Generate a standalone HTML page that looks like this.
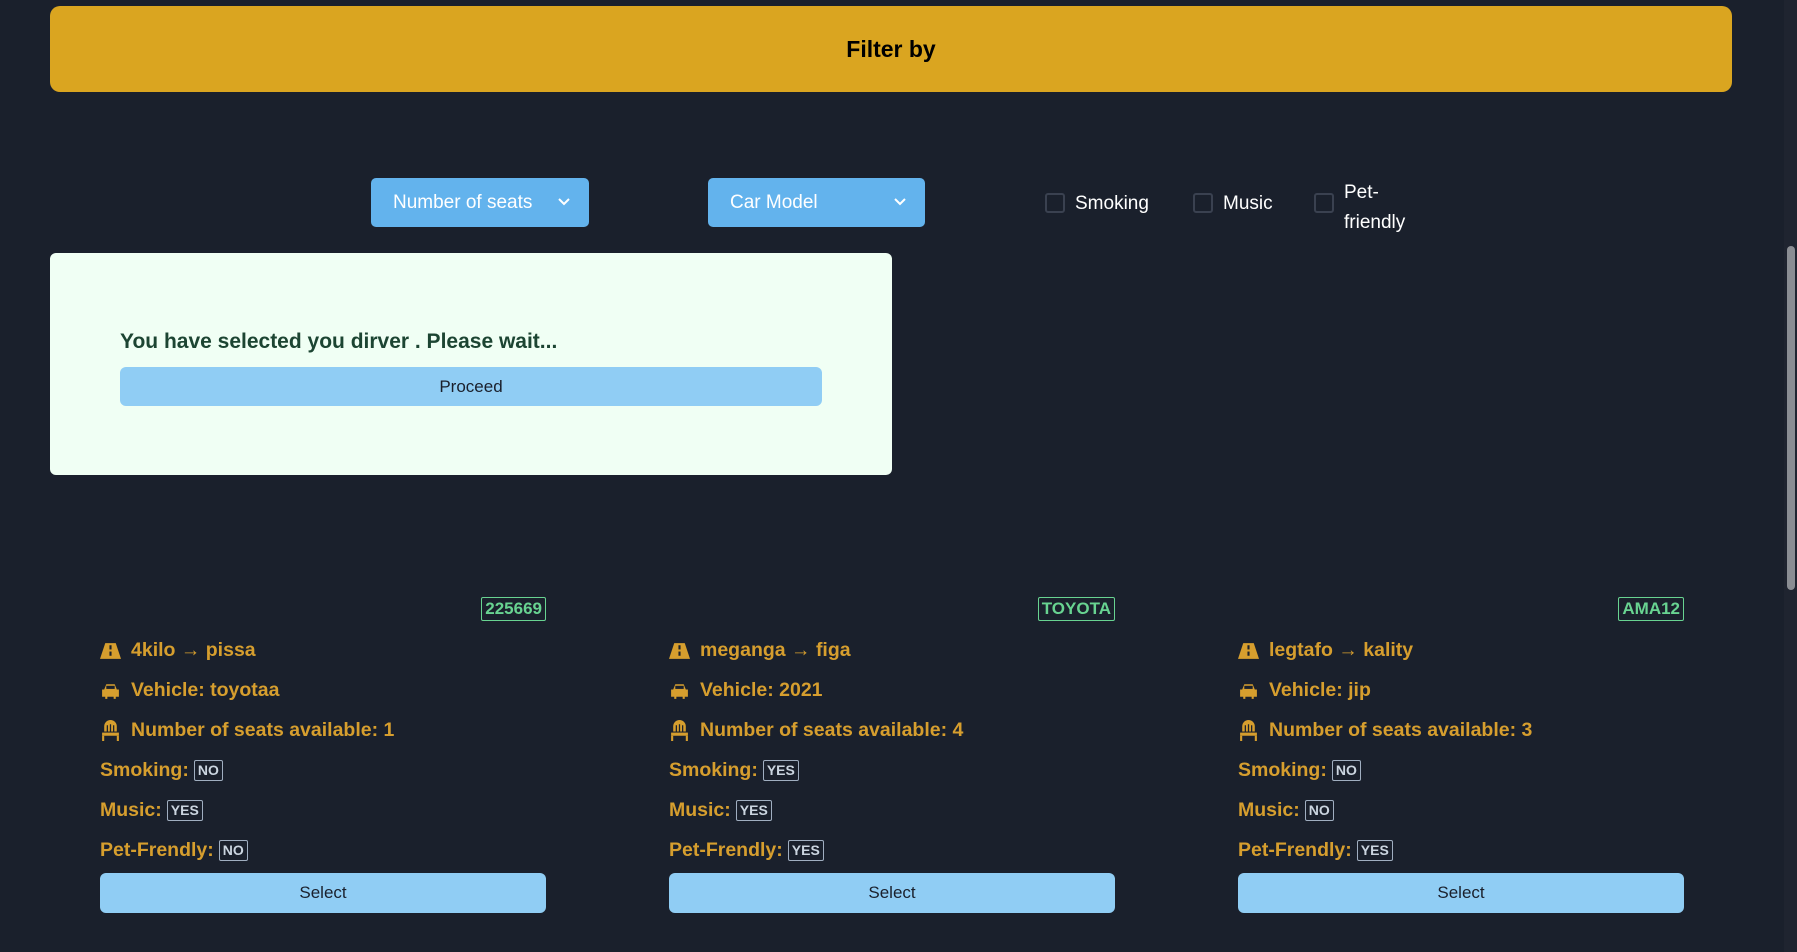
<!DOCTYPE html>
<html><head><meta charset="utf-8"><style>
*{box-sizing:border-box;margin:0;padding:0}
html,body{width:1797px;height:952px;overflow:hidden;background:#1a202c;font-family:"Liberation Sans",sans-serif;position:relative}
.a{position:absolute}
.bar{left:50px;top:6px;width:1682px;height:86px;background:#daa520;border-radius:10px;display:flex;align-items:center;justify-content:center;font-weight:bold;font-size:23px;color:#000}
.sb{left:1784px;top:0;width:13px;height:952px;background:#1f2430}
.thumb{left:1787px;top:246px;width:8px;height:344px;background:#8a8d93;border-radius:4px}
.dd{top:178px;height:49px;background:#63b3ed;border-radius:5px;color:#fff;font-size:19px;display:flex;align-items:center;padding-left:22px}
.dd svg{position:absolute;right:18px;top:19px}
.cb{width:20px;height:20px;border:2px solid #3a4150;border-radius:3px;top:193px}
.lbl{color:#fff;font-size:19px}
.card{left:50px;top:253px;width:842px;height:222px;background:#f0fff4;border-radius:6px}
.h{left:120px;top:330px;font-size:21px;font-weight:bold;color:#1c4532}
.btn{background:#90cdf4;border-radius:6px;color:#1a202c;font-size:17px;display:flex;align-items:center;justify-content:center}
.col{top:590px;width:446px;height:330px}
.badge{position:absolute;right:0;top:7px;border:1.5px solid #68d391;color:#68d391;font-weight:bold;font-size:17px;padding:1px 3px;border-radius:2px;line-height:20px}
.ln{position:absolute;left:0;color:#d69e2e;font-weight:bold;font-size:19.5px;display:flex;align-items:center;height:24px}
.ln svg{margin-right:10px}
.yn{border:1.5px solid #a0aec0;color:#cbd5e0;font-size:14px;font-weight:bold;padding:1px 3px;margin-left:5px;border-radius:2px;line-height:17px}
.sel{position:absolute;left:0;top:283px;width:446px;height:40px}
</style></head><body>
<div class="a sb"></div><div class="a thumb"></div>
<div class="a bar">Filter by</div>
<div class="a dd" style="left:371px;width:218px">Number of seats<svg width="14" height="10" viewBox="0 0 14 10"><path d="M2 2l5 5 5-5" stroke="#fff" stroke-width="2" fill="none"/></svg></div>
<div class="a dd" style="left:708px;width:217px">Car Model<svg width="14" height="10" viewBox="0 0 14 10"><path d="M2 2l5 5 5-5" stroke="#fff" stroke-width="2" fill="none"/></svg></div>
<div class="a cb" style="left:1045px"></div><div class="a lbl" style="left:1075px;top:193px">Smoking</div>
<div class="a cb" style="left:1193px"></div><div class="a lbl" style="left:1223px;top:193px">Music</div>
<div class="a cb" style="left:1314px"></div><div class="a lbl" style="left:1344px;top:178px;line-height:30px">Pet-<br>friendly</div>
<div class="a card"></div>
<div class="a h">You have selected you dirver . Please wait...</div>
<div class="a btn" style="left:120px;top:367px;width:702px;height:39px">Proceed</div>

<div class="a col" style="left:100px">
<div class="badge">225669</div>
<div class="ln" style="top:48px"><svg width="21" height="17" viewBox="0 0 20 16"><path d="M5 1h10l5 15H0z" fill="#d69e2e"/><rect x="9" y="3" width="2" height="4" fill="#1a202c"/><rect x="9" y="9" width="2" height="4" fill="#1a202c"/></svg>4kilo → pissa</div>
<div class="ln" style="top:88px"><svg width="21" height="17" viewBox="0 0 20 16"><path d="M4 7l2-5h8l2 5h2v7h-3v2h-2v-2H7v2H5v-2H2V7z" fill="#d69e2e"/><rect x="6" y="3.5" width="8" height="3" fill="#1a202c"/></svg>Vehicle: toyotaa</div>
<div class="ln" style="top:128px"><svg width="21" height="21" viewBox="0 0 20 20"><path d="M4 11V6a6 6 0 0112 0v5z" fill="#d69e2e"/><path d="M7 5v6M10 4v7M13 5v6" stroke="#1a202c" stroke-width="1.2"/><rect x="2" y="12" width="16" height="3" fill="#d69e2e"/><rect x="2" y="15" width="2" height="5" fill="#d69e2e"/><rect x="16" y="15" width="2" height="5" fill="#d69e2e"/></svg>Number of seats available: 1</div>
<div class="ln" style="top:168px">Smoking:<span class="yn">NO</span></div>
<div class="ln" style="top:208px">Music:<span class="yn">YES</span></div>
<div class="ln" style="top:248px">Pet-Frendly:<span class="yn">NO</span></div>
<div class="btn sel">Select</div>
</div>

<div class="a col" style="left:669px">
<div class="badge">TOYOTA</div>
<div class="ln" style="top:48px"><svg width="21" height="17" viewBox="0 0 20 16"><path d="M5 1h10l5 15H0z" fill="#d69e2e"/><rect x="9" y="3" width="2" height="4" fill="#1a202c"/><rect x="9" y="9" width="2" height="4" fill="#1a202c"/></svg>meganga → figa</div>
<div class="ln" style="top:88px"><svg width="21" height="17" viewBox="0 0 20 16"><path d="M4 7l2-5h8l2 5h2v7h-3v2h-2v-2H7v2H5v-2H2V7z" fill="#d69e2e"/><rect x="6" y="3.5" width="8" height="3" fill="#1a202c"/></svg>Vehicle: 2021</div>
<div class="ln" style="top:128px"><svg width="21" height="21" viewBox="0 0 20 20"><path d="M4 11V6a6 6 0 0112 0v5z" fill="#d69e2e"/><path d="M7 5v6M10 4v7M13 5v6" stroke="#1a202c" stroke-width="1.2"/><rect x="2" y="12" width="16" height="3" fill="#d69e2e"/><rect x="2" y="15" width="2" height="5" fill="#d69e2e"/><rect x="16" y="15" width="2" height="5" fill="#d69e2e"/></svg>Number of seats available: 4</div>
<div class="ln" style="top:168px">Smoking:<span class="yn">YES</span></div>
<div class="ln" style="top:208px">Music:<span class="yn">YES</span></div>
<div class="ln" style="top:248px">Pet-Frendly:<span class="yn">YES</span></div>
<div class="btn sel">Select</div>
</div>

<div class="a col" style="left:1238px">
<div class="badge">AMA12</div>
<div class="ln" style="top:48px"><svg width="21" height="17" viewBox="0 0 20 16"><path d="M5 1h10l5 15H0z" fill="#d69e2e"/><rect x="9" y="3" width="2" height="4" fill="#1a202c"/><rect x="9" y="9" width="2" height="4" fill="#1a202c"/></svg>legtafo → kality</div>
<div class="ln" style="top:88px"><svg width="21" height="17" viewBox="0 0 20 16"><path d="M4 7l2-5h8l2 5h2v7h-3v2h-2v-2H7v2H5v-2H2V7z" fill="#d69e2e"/><rect x="6" y="3.5" width="8" height="3" fill="#1a202c"/></svg>Vehicle: jip</div>
<div class="ln" style="top:128px"><svg width="21" height="21" viewBox="0 0 20 20"><path d="M4 11V6a6 6 0 0112 0v5z" fill="#d69e2e"/><path d="M7 5v6M10 4v7M13 5v6" stroke="#1a202c" stroke-width="1.2"/><rect x="2" y="12" width="16" height="3" fill="#d69e2e"/><rect x="2" y="15" width="2" height="5" fill="#d69e2e"/><rect x="16" y="15" width="2" height="5" fill="#d69e2e"/></svg>Number of seats available: 3</div>
<div class="ln" style="top:168px">Smoking:<span class="yn">NO</span></div>
<div class="ln" style="top:208px">Music:<span class="yn">NO</span></div>
<div class="ln" style="top:248px">Pet-Frendly:<span class="yn">YES</span></div>
<div class="btn sel">Select</div>
</div>
</body></html>
